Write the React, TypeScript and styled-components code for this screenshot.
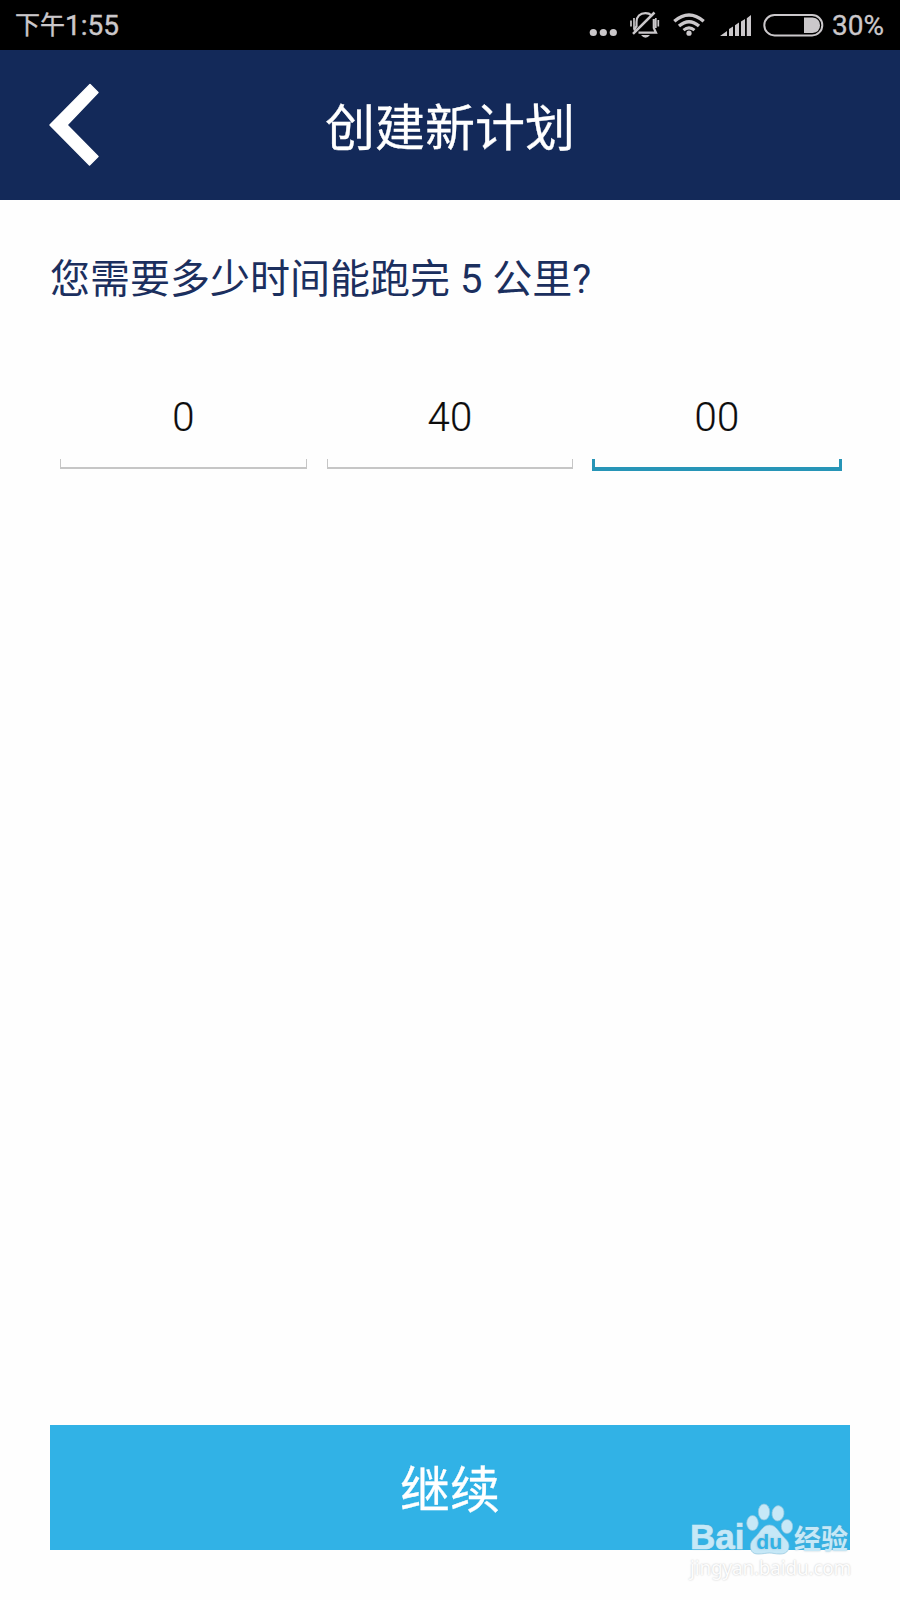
import React from "react";
import styled, { createGlobalStyle } from "styled-components";

const GlobalStyle = createGlobalStyle`
  *, *::before, *::after { box-sizing: border-box; }
  body { margin: 0; background: #fefefe; }
`;

const Screen = styled.div`
  position: relative;
  display: flex;
  flex-direction: column;
  width: 900px;
  height: 1600px;
  overflow: hidden;
  background: #fefefe;
  font-family: Roboto, "Noto Sans CJK SC", sans-serif;
`;

const StatusBar = styled.div`
  display: flex;
  align-items: center;
  justify-content: space-between;
  height: 50px;
  padding: 1px 16px 0 15px;
  background: #000;
  color: #cbc8cb;
  font-size: 28px;
  line-height: 50px;
`;

const Clock = styled.div`
  display: flex;
  align-items: center;
  height: 50px;
  -webkit-text-stroke: 0.4px #cbc8cb;
`;

const ClockPeriod = styled.span`
  font-size: 25px;
  line-height: 48px;
`;

const StatusIcons = styled.div`
  display: flex;
  align-items: center;
  height: 50px;
  -webkit-text-stroke: 0.3px #cbc8cb;
`;

const StatusDrawing = styled.svg`
  display: block;
  margin: -1px 8px 0 0;
`;

const Header = styled.header`
  display: grid;
  grid-template-columns: 150px 1fr 150px;
  align-items: center;
  height: 150px;
  background: #132959;
`;

const BackButton = styled.button`
  height: 150px;
  padding: 0;
  border: 0;
  background: none;
`;

const Title = styled.h1`
  margin: 0;
  padding-top: 7px;
  color: #fff;
  font-size: 50px;
  font-weight: 400;
  line-height: 74px;
  text-align: center;
  -webkit-text-stroke: 0.3px #fff;
`;

const Content = styled.main`
  display: flex;
  flex: 1;
  flex-direction: column;
  padding: 50px 50px 50px;
`;

const Question = styled.p`
  margin: 0;
  color: #1b2f5e;
  font-size: 40px;
  line-height: 60px;
  white-space: pre;
`;

const Fields = styled.div`
  display: grid;
  grid-template-columns: 247px 247px 250px;
  column-gap: 19px;
  margin: 81px 0 0 10px;
`;

const Field = styled.div<{ $shift: number }>`
  display: flex;
  flex-direction: column;
  padding-left: ${(p) => p.$shift}px;
`;

const Value = styled.span`
  height: 68px;
  color: #0c0c0c;
  font-size: 40px;
  font-weight: 300;
  line-height: 54px;
  text-align: center;
  letter-spacing: 0.3px;
  -webkit-text-stroke: 0.2px #0c0c0c;
`;

const Underline = styled.div<{ $active?: boolean }>`
  height: ${(p) => (p.$active ? 12 : 10)}px;
  border-style: solid;
  border-color: ${(p) => (p.$active ? "#2795b7" : "#c6c6c6")};
  border-width: ${(p) => (p.$active ? "0 3px 4px" : "0 1px 2px")};
`;

const ContinueButton = styled.button`
  height: 125px;
  margin-top: auto;
  padding: 7px 0 0;
  border: 0;
  background: #31b2e6;
  color: #fff;
  font: 400 50px/74px Roboto, "Noto Sans CJK SC", sans-serif;
  -webkit-text-stroke: 0.3px #fff;
`;

const Watermark = styled.div`
  position: absolute;
  left: 690px;
  top: 1502px;
  width: 164px;
`;

const Brand = styled.div`
  display: flex;
  align-items: flex-end;
  height: 53px;
  color: #c6e8f7;
  text-shadow: 0 0 2px rgba(120, 160, 180, 0.6);
`;

const BrandLatin = styled.span`
  width: 55px;
  font: 700 35px/36px "Liberation Sans", sans-serif;
  -webkit-text-stroke: 0.6px #c6e8f7;
`;

const BrandChinese = styled.span`
  margin-left: 1px;
  font: 700 27px/34px "Noto Sans CJK SC", sans-serif;
  white-space: nowrap;
`;

const Site = styled.div`
  color: #fdfdfd;
  font: 400 19px/26px "Noto Sans", sans-serif;
  letter-spacing: -0.2px;
  text-shadow: 0 0 2px #c0c0c0;
  white-space: nowrap;
`;

const fields = [
  { value: "0", active: false, shift: 0 },
  { value: "40", active: false, shift: 1 },
  { value: "00", active: true, shift: 0 },
];

function StatusGlyphs() {
  return (
    <StatusDrawing width="236" height="50" viewBox="588 0 236 50" fill="#cbc8cb">
      <circle cx="593.3" cy="32.5" r="3.6" />
      <circle cx="603.3" cy="32.5" r="3.6" />
      <circle cx="613.3" cy="32.5" r="3.6" />
      <g fill="none" stroke="#cbc8cb" strokeWidth="2.2">
        <path d="M636.5 27V22C636.5 16.5 640 13.2 645.5 13.2C648 13.2 650 14 651.3 15.3M653.8 19V28L656 32.7H638.5M636.5 26L634 30.5" />
        <path d="M654.5 12.5L633 33.8" strokeWidth="2.5" />
        <path d="M634 18V29M631 20.5V26.5M655.8 18V28M658.3 20V26.5" strokeWidth="1.7" />
      </g>
      <path d="M641 35H650Q645.5 40.5 641 35Z" />
      <g fill="none" stroke="#cbc8cb" strokeWidth="3.4">
        <path d="M674.3 21.3Q689 8.7 703.7 21.3" />
        <path d="M679 26Q689 17.5 699 26" />
        <path d="M683.5 30.2Q689 25.5 694.5 30.2" strokeWidth="3" />
      </g>
      <circle cx="689" cy="33.2" r="2.6" />
      <path d="M720 36L727 31V36ZM729 29L733 26.5V36H729ZM735 25.3L739 22.5V36H735ZM741 21.5L745 19V36H741ZM746.8 18.3L751 15V36H746.8Z" />
      <rect x="764.3" y="15" width="58" height="20.4" rx="10.2" fill="none" stroke="#cbc8cb" strokeWidth="2" />
      <path d="M804 17.5H812.5Q820 18.5 820 25.2Q820 32 812.5 33H804Z" />
    </StatusDrawing>
  );
}

function Paw() {
  return (
    <svg width="48" height="53" viewBox="744 1502 48 53">
      <g fill="#c6e8f7" stroke="#8fc4dc" strokeWidth="0.7">
        <ellipse cx="751.5" cy="1523" rx="5.8" ry="7.5" />
        <ellipse cx="763" cy="1512" rx="5.7" ry="8" />
        <ellipse cx="777" cy="1513.3" rx="6" ry="7.7" transform="rotate(8 777 1513.3)" />
        <ellipse cx="786" cy="1526.5" rx="5.7" ry="7" />
        <path d="M768.5 1525C774 1525 777 1530 780 1534C784 1539 788 1541 788 1546C788 1551 785 1554 779 1554C774 1554 772 1553 768.5 1553C765 1553 762 1554 757 1554C751 1554 749 1550 749.5 1545C750 1540 754 1538 757 1534C760 1530 763 1525 768.5 1525Z" />
      </g>
      <text x="768.2" y="1549" textAnchor="middle" textLength="26" fill="#31b2e6" fontFamily="Liberation Sans, sans-serif" fontWeight="700" fontSize="21">du</text>
    </svg>
  );
}

export default function App() {
  return (
    <>
      <GlobalStyle />
      <Screen>
        <StatusBar>
          <Clock>
            <ClockPeriod>下午</ClockPeriod>1:55
          </Clock>
          <StatusIcons>
            <StatusGlyphs />
            30%
          </StatusIcons>
        </StatusBar>
        <Header>
          <BackButton aria-label="返回">
            <svg width="150" height="150" viewBox="0 0 150 150">
              <path
                d="M90 34.5L98 42.5L67 75L98 106.5L89.5 115L50 75Z"
                fill="#fff"
                stroke="#fff"
                strokeWidth="1.5"
                strokeLinejoin="round"
              />
            </svg>
          </BackButton>
          <Title>创建新计划</Title>
        </Header>
        <Content>
          <Question>您需要多少时间能跑完 5 公里?</Question>
          <Fields>
            {fields.map((field, index) => (
              <Field key={index} $shift={field.shift}>
                <Value>{field.value}</Value>
                <Underline $active={field.active} />
              </Field>
            ))}
          </Fields>
          <ContinueButton>继续</ContinueButton>
        </Content>
        <Watermark>
          <Brand>
            <BrandLatin>Bai</BrandLatin>
            <Paw />
            <BrandChinese>经验</BrandChinese>
          </Brand>
          <Site>jingyan.baidu.com</Site>
        </Watermark>
      </Screen>
    </>
  );
}
